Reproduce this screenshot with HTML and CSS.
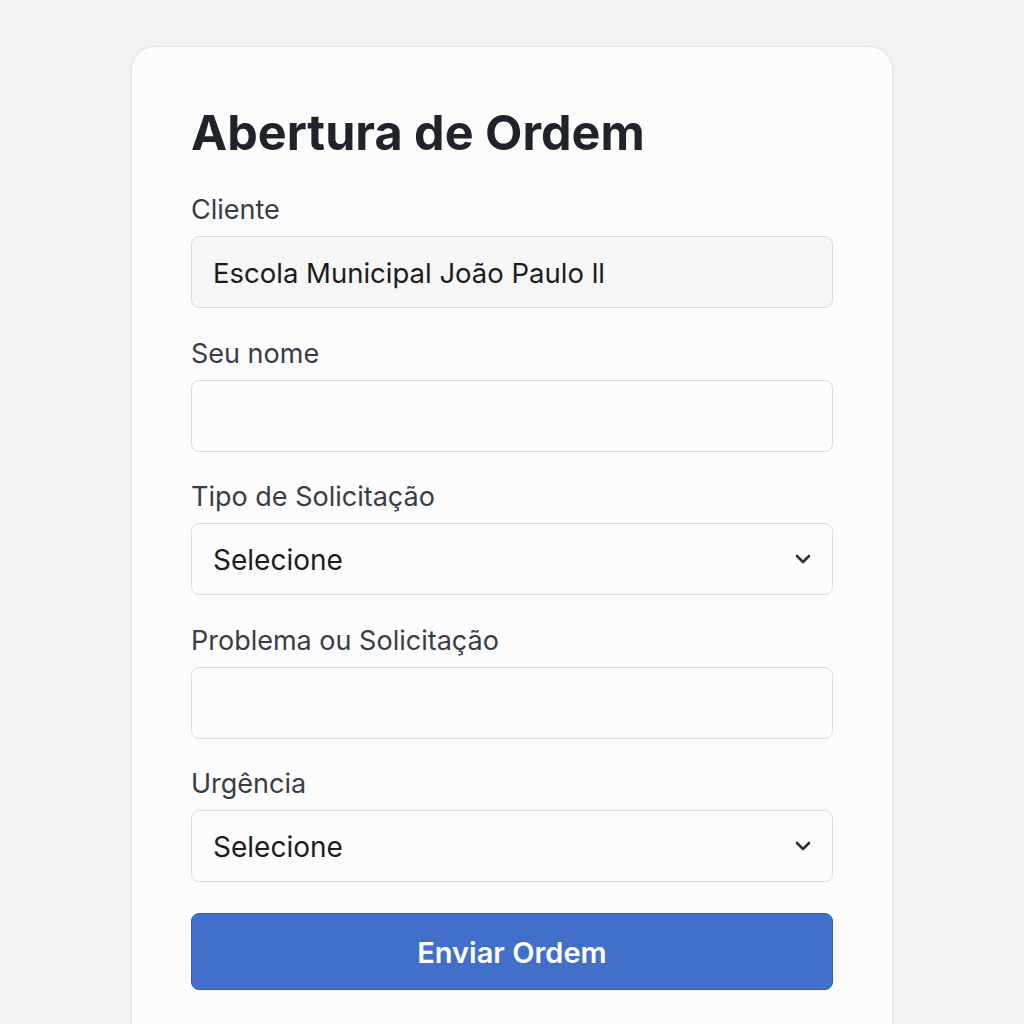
FILE: index.html
```html
<!DOCTYPE html>
<html lang="pt-BR">
<head>
<meta charset="utf-8">
<title>Abertura de Ordem</title>
<link rel="stylesheet" href="styles.css">
</head>
<body>
<main class="card">
  <h1 class="title">Abertura de Ordem</h1>
  <form class="form">
    <div class="field">
      <label class="label">Cliente</label>
      <div class="input input-filled">Escola Municipal João Paulo ll</div>
    </div>
    <div class="field">
      <label class="label">Seu nome</label>
      <div class="input"></div>
    </div>
    <div class="field">
      <label class="label">Tipo de Solicitação</label>
      <div class="input select">
        <span>Selecione</span>
        <svg class="chevron" width="16" height="10" viewBox="0 0 16 10"><path d="M2 2 L8 8 L14 2" fill="none" stroke="#2a2f3a" stroke-width="2.6" stroke-linecap="round" stroke-linejoin="round"/></svg>
      </div>
    </div>
    <div class="field">
      <label class="label">Problema ou Solicitação</label>
      <div class="input"></div>
    </div>
    <div class="field">
      <label class="label">Urgência</label>
      <div class="input select">
        <span>Selecione</span>
        <svg class="chevron" width="16" height="10" viewBox="0 0 16 10"><path d="M2 2 L8 8 L14 2" fill="none" stroke="#2a2f3a" stroke-width="2.6" stroke-linecap="round" stroke-linejoin="round"/></svg>
      </div>
    </div>
    <div class="button">Enviar Ordem</div>
  </form>
</main>
</body>
</html>
```
FILE: styles.css
```css
* { box-sizing: border-box; }
html, body { margin: 0; padding: 0; }
body {
  background: #f3f2f0;
  font-family: Inter, "Noto Sans", sans-serif;
  display: flex;
  justify-content: center;
  height: 1024px;
  overflow: hidden;
}
.card {
  margin-top: 46px;
  width: 762px;
  height: 1100px;
  background: #fcfcfc;
  border: 1px solid #e2e2e2;
  border-radius: 24px;
  padding: 58px 59px 0 59px;
  box-shadow: 0 2px 10px rgba(0,0,0,0.03);
}
.title {
  margin: 0 0 32px 0;
  font-size: 48.5px;
  line-height: 56px;
  font-weight: 700;
  color: #1f232b;
}
.form { display: flex; flex-direction: column; }
.field { display: flex; flex-direction: column; margin-bottom: 28.5px; }
.label {
  font-size: 27px;
  line-height: 32px;
  color: #383d48;
  margin-bottom: 11px;
  padding-top: 1px;
  height: 32px;
}
.input {
  height: 72px;
  border: 1px solid #dcdcdc;
  border-radius: 8px;
  background: #fcfcfc;
  padding: 2px 21px 0 21px;
  display: flex;
  align-items: center;
  font-size: 27.5px;
  color: #1c1c1e;
}
.input-filled { background: #f6f6f6; }
.select { justify-content: space-between; font-size: 28px; }
.chevron { margin-top: -2px; }
.button {
  margin-top: 2.5px;
  height: 77px;
  background: #416fca;
  border: 1px solid #2d5cc6;
  border-radius: 8px;
  color: #ffffff;
  font-size: 29px;
  font-weight: 600;
  padding-top: 2px;
  display: flex;
  align-items: center;
  justify-content: center;
}
```
